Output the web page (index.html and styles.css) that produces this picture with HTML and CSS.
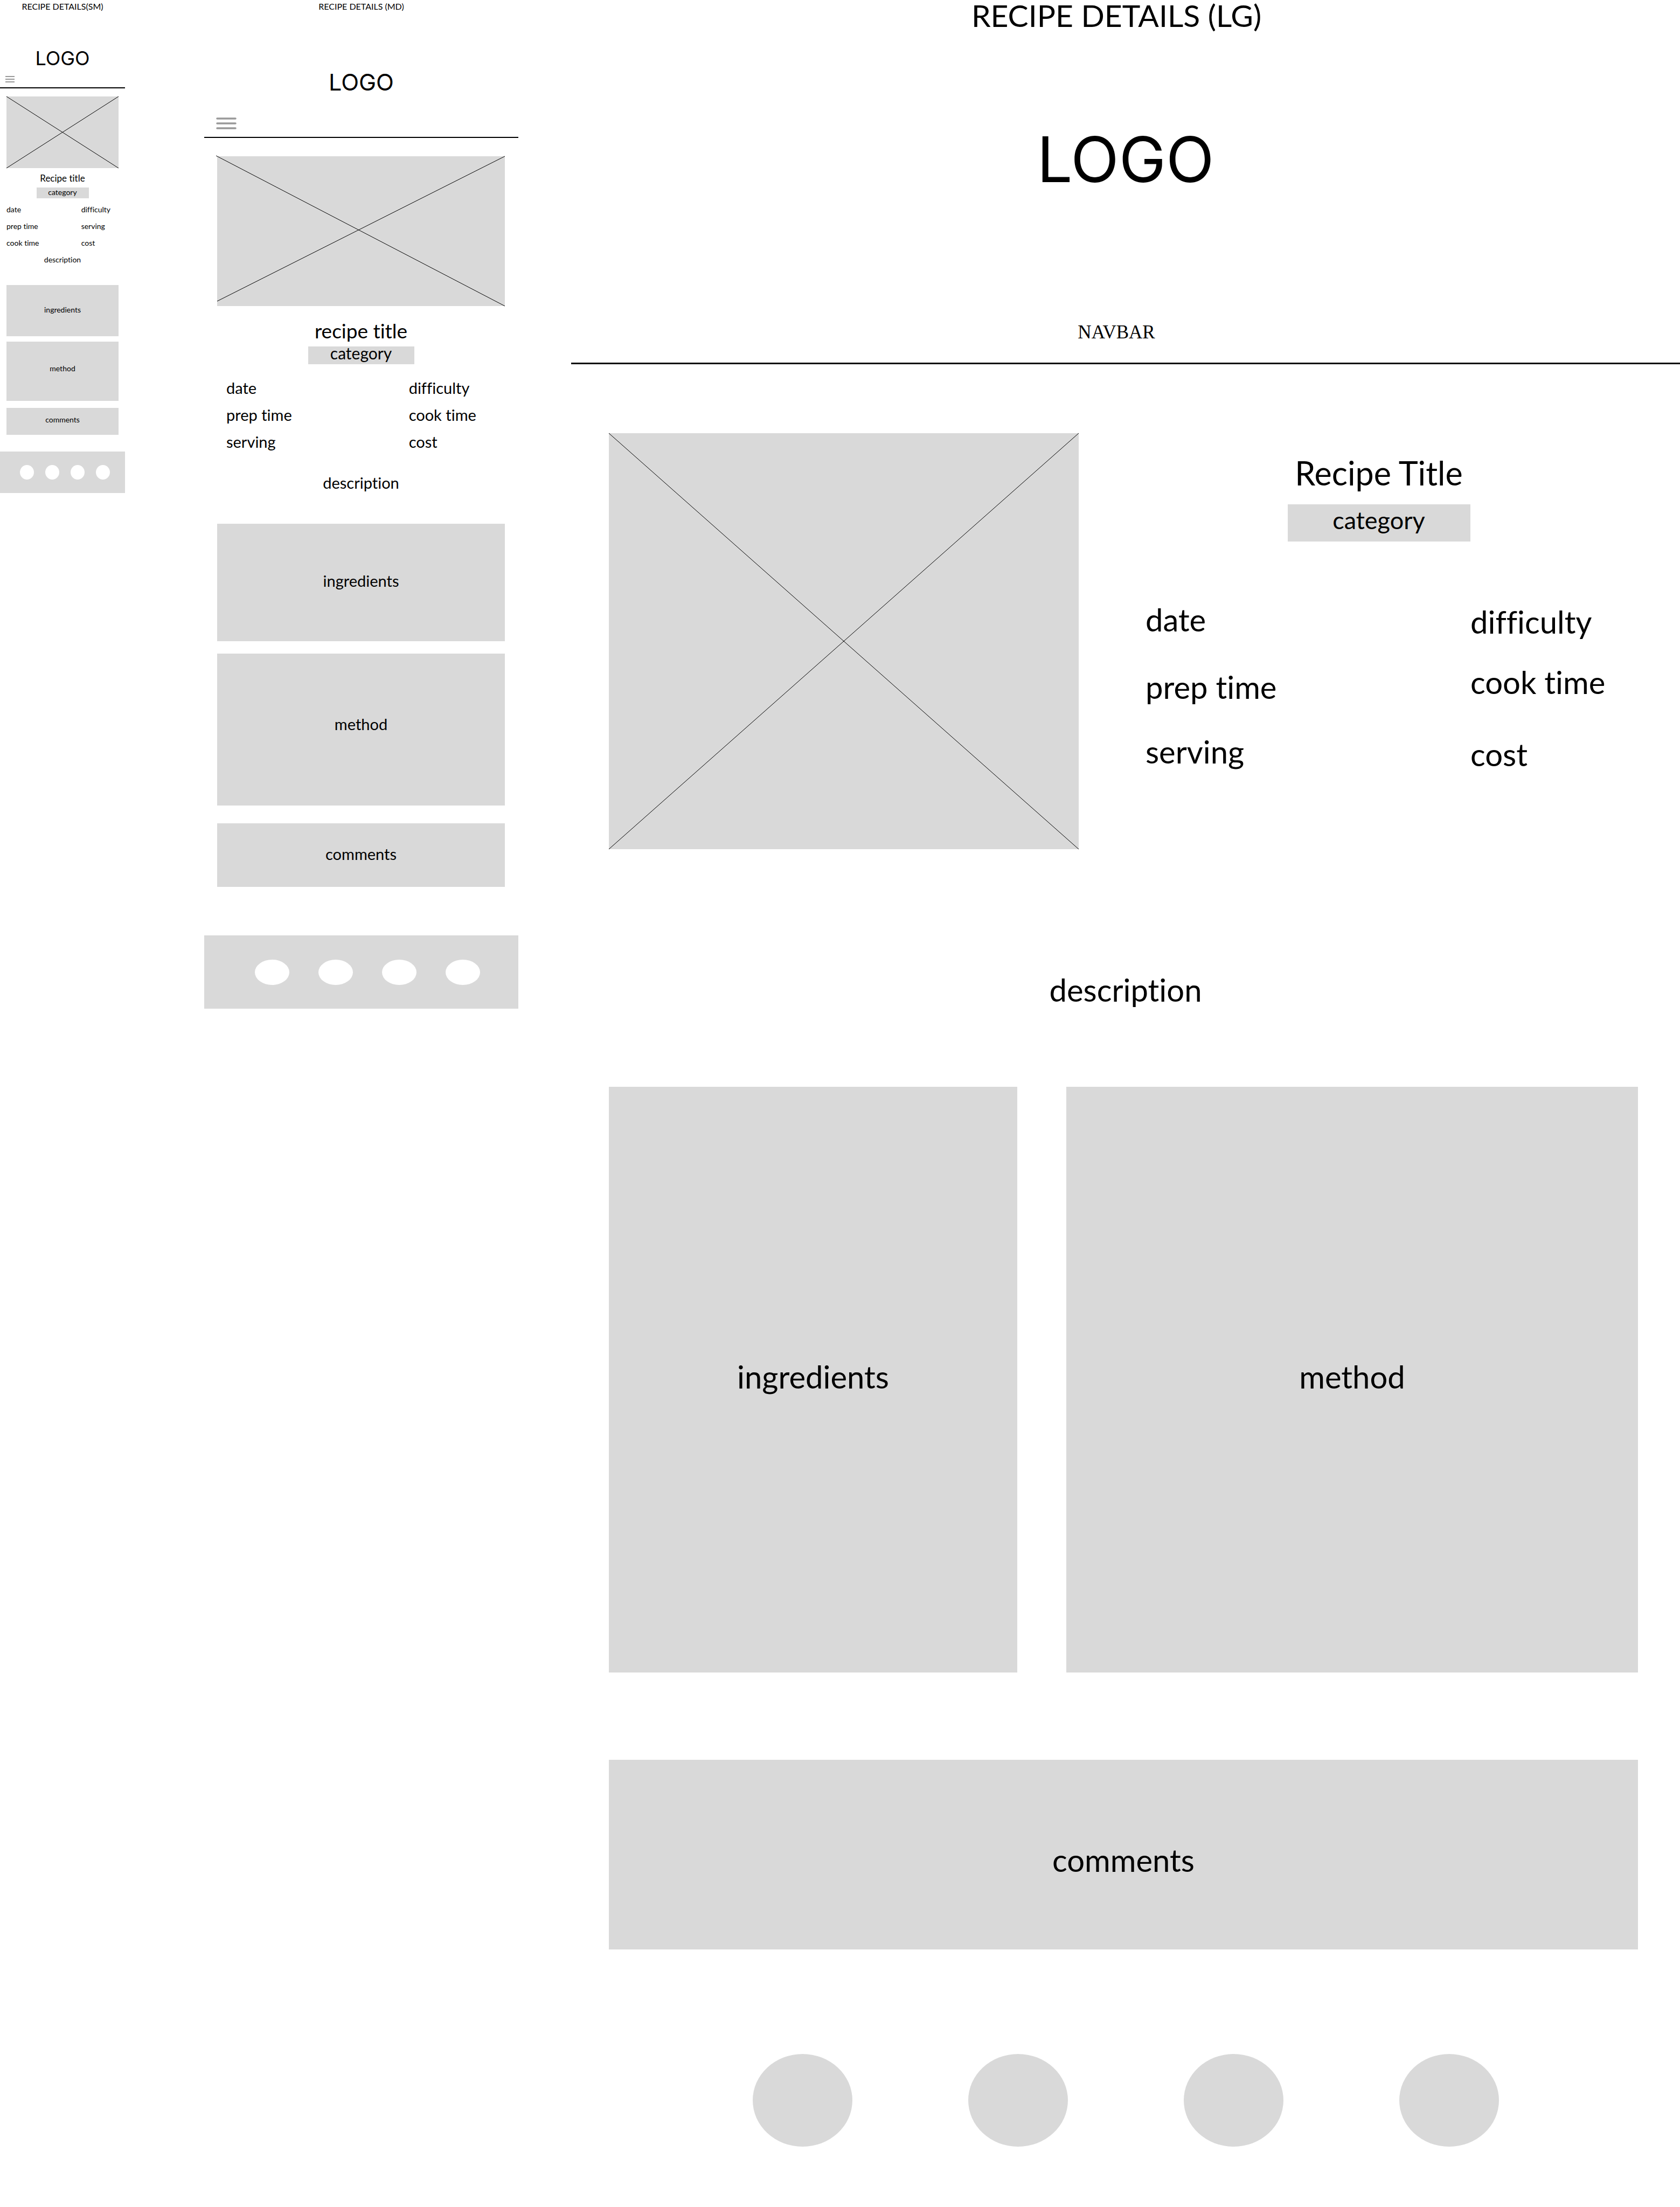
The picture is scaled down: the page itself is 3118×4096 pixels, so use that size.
FILE: index.html
```html
<!DOCTYPE html>
<html lang="en">
<head>
<meta charset="utf-8">
<meta name="viewport" content="width=device-width, initial-scale=1">
<title>Recipe details wireframes</title>
<link rel="stylesheet" href="styles.css">
</head>
<body>
<main class="boards">

  <section class="board board-sm">
    <h2 class="board-title">RECIPE DETAILS(SM)</h2>
    <header class="site-header">
      <div class="logo">LOGO</div>
      <button class="menu-button" type="button" aria-label="Menu">
        <svg class="menu-icon" viewBox="0 0 17 12" aria-hidden="true"><path d="M0 1h17M0 6h17M0 11h17" stroke-width="2"/></svg>
      </button>
    </header>
    <div class="content">
      <svg class="photo" viewBox="0 0 208 133" preserveAspectRatio="none" aria-hidden="true"><path d="M0 0L208 133M0 133L208 0"/></svg>
      <h1 class="recipe-title">Recipe title</h1>
      <p class="category">category</p>
      <div class="meta">
        <ul class="meta-column">
          <li>date</li>
          <li>prep time</li>
          <li>cook time</li>
        </ul>
        <ul class="meta-column">
          <li>difficulty</li>
          <li>serving</li>
          <li>cost</li>
        </ul>
      </div>
      <p class="description">description</p>
      <section class="panel ingredients">ingredients</section>
      <section class="panel method">method</section>
      <section class="panel comments">comments</section>
    </div>
    <footer class="site-footer">
      <a class="dot" href="#" aria-label="Social link 1"></a>
      <a class="dot" href="#" aria-label="Social link 2"></a>
      <a class="dot" href="#" aria-label="Social link 3"></a>
      <a class="dot" href="#" aria-label="Social link 4"></a>
    </footer>
  </section>

  <section class="board board-md">
    <h2 class="board-title">RECIPE DETAILS (MD)</h2>
    <header class="site-header">
      <div class="logo">LOGO</div>
      <button class="menu-button" type="button" aria-label="Menu">
        <svg class="menu-icon" viewBox="0 0 38 22" aria-hidden="true"><path d="M2 2h34M2 11h34M2 20h34" stroke-width="3.5" stroke-linecap="round"/></svg>
      </button>
    </header>
    <div class="content">
      <svg class="photo" viewBox="0 0 534 278" preserveAspectRatio="none" aria-hidden="true"><path d="M-2 -1L534 278M0 269L534 0"/></svg>
      <h1 class="recipe-title">recipe title</h1>
      <p class="category">category</p>
      <div class="meta">
        <ul class="meta-column">
          <li>date</li>
          <li>prep time</li>
          <li>serving</li>
        </ul>
        <ul class="meta-column">
          <li>difficulty</li>
          <li>cook time</li>
          <li>cost</li>
        </ul>
      </div>
      <p class="description">description</p>
      <section class="panel ingredients">ingredients</section>
      <section class="panel method">method</section>
      <section class="panel comments">comments</section>
    </div>
    <footer class="site-footer">
      <a class="dot" href="#" aria-label="Social link 1"></a>
      <a class="dot" href="#" aria-label="Social link 2"></a>
      <a class="dot" href="#" aria-label="Social link 3"></a>
      <a class="dot" href="#" aria-label="Social link 4"></a>
    </footer>
  </section>

  <section class="board board-lg">
    <h2 class="board-title">RECIPE DETAILS (LG)</h2>
    <header class="site-header">
      <div class="logo">LOGO</div>
      <nav class="navbar">NAVBAR</nav>
    </header>
    <div class="hero">
      <svg class="photo" viewBox="0 0 872 772" preserveAspectRatio="none" aria-hidden="true"><path d="M0 0L872 772M0 772L872 0"/></svg>
      <div class="info">
        <h1 class="recipe-title">Recipe Title</h1>
        <p class="category">category</p>
        <div class="meta">
          <ul class="meta-column">
            <li>date</li>
            <li>prep time</li>
            <li>serving</li>
          </ul>
          <ul class="meta-column">
            <li>difficulty</li>
            <li>cook time</li>
            <li>cost</li>
          </ul>
        </div>
      </div>
    </div>
    <p class="description">description</p>
    <div class="panels">
      <section class="panel ingredients">ingredients</section>
      <section class="panel method">method</section>
      <section class="panel comments">comments</section>
    </div>
    <footer class="site-footer">
      <a class="dot" href="#" aria-label="Social link 1"></a>
      <a class="dot" href="#" aria-label="Social link 2"></a>
      <a class="dot" href="#" aria-label="Social link 3"></a>
      <a class="dot" href="#" aria-label="Social link 4"></a>
    </footer>
  </section>

</main>
</body>
</html>
```
FILE: styles.css
```css
*, *::before, *::after { box-sizing: border-box; }

body {
  margin: 0;
  background: #fff;
  color: #000;
  font-family: Lato, "Open Sans", sans-serif;
  font-variant-ligatures: none;
}

h1, h2, p, ul {
  margin: 0;
  padding: 0;
  font-weight: 400;
  list-style: none;
}

/* Shared wireframe parts */

.boards {
  display: grid;
  grid-template-columns: minmax(0, 281fr) minmax(0, 583fr) minmax(0, 2058fr);
  column-gap: 98px;
  align-items: start;
}

.board-title,
.recipe-title,
.description { text-align: center; }

.site-header { border-bottom: 2px solid #000; }

.logo {
  font-family: Inter, sans-serif;
  text-align: center;
}

.menu-button {
  display: block;
  padding: 0;
  border: 0;
  background: none;
}

.menu-icon {
  display: block;
  width: 100%;
  fill: none;
  stroke: #999;
}

.photo {
  display: block;
  width: 100%;
  background: #d9d9d9;
  fill: none;
  stroke: #000;
  stroke-width: 1;
  overflow: visible;
}

.category {
  margin-inline: auto;
  background: #d9d9d9;
  text-align: center;
}

.meta { display: grid; }

.meta-column { display: grid; }

.panel {
  display: flex;
  align-items: center;
  justify-content: center;
  background: #d9d9d9;
}

.site-footer {
  display: flex;
  background: #d9d9d9;
}

.dot {
  border-radius: 50%;
  background: #fff;
}

/* Small */

.board-sm {
  margin-right: 49px;
  font-size: 14px;
  line-height: 18px;
}

.board-sm .board-title { font-size: 16px; line-height: 24px; }
.board-sm .logo { margin-top: 62px; font-size: 36px; line-height: 44px; }
.board-sm .site-header { padding-bottom: 9px; }
.board-sm .menu-button { width: 17px; margin: 11px 0 0 10px; }
.board-sm .content { padding: 15px 12px 0; }
.board-sm .recipe-title { margin-top: 9px; font-size: 17px; line-height: 20px; }
.board-sm .category { width: 97px; margin-top: 7px; padding-bottom: 2px; line-height: 18px; }
.board-sm .meta { grid-template-columns: 2fr 1fr; margin-top: 12px; }
.board-sm .meta-column { row-gap: 13px; }
.board-sm .description { margin: 13px 0 38px; }
.board-sm .ingredients { min-height: 95px; padding-bottom: 4px; }
.board-sm .method { min-height: 110px; margin-top: 10px; padding-bottom: 10px; }
.board-sm .comments { min-height: 50px; margin-top: 13px; padding-bottom: 6px; }
.board-sm .site-footer { gap: 21px; margin-top: 31px; padding: 25px 28px 25px 37px; }
.board-sm .dot { width: 26px; height: 27px; }

/* Medium */

.board-md {
  font-size: 29px;
  line-height: 36px;
}

.board-md .board-title { font-size: 16px; line-height: 24px; }
.board-md .logo { margin-top: 102px; font-size: 43px; line-height: 52px; }
.board-md .site-header { padding-bottom: 14px; }
.board-md .menu-button { width: 38px; margin: 40px 0 0 22px; }
.board-md .content { padding: 34px 25px 0 24px; }
.board-md .recipe-title { margin-top: 24px; font-size: 37px; line-height: 44px; }
.board-md .category { width: 197px; margin-top: 7px; padding-bottom: 8px; font-size: 30px; line-height: 25px; }
.board-md .meta { grid-template-columns: 338fr 178fr; margin-top: 26px; padding-left: 17px; }
.board-md .meta-column { row-gap: 14px; }
.board-md .description { margin: 40px 0 58px; }
.board-md .ingredients { min-height: 218px; padding-bottom: 6px; }
.board-md .method { min-height: 282px; margin-top: 23px; padding-bottom: 20px; }
.board-md .comments { min-height: 118px; margin-top: 33px; padding-bottom: 4px; }
.board-md .site-footer { gap: 54px; margin-top: 90px; padding: 45px 71px 44px 94px; }
.board-md .dot { width: 64px; height: 47px; }

/* Large */

.board-lg {
  padding-bottom: 112px;
  font-size: 58px;
  line-height: 70px;
}

.board-lg .board-title { padding-right: 34px; font-size: 57px; line-height: 56px; }
.board-lg .site-header { padding-bottom: 34px; border-bottom-width: 3px; }
.board-lg .logo { margin-top: 170px; font-size: 117px; line-height: 140px; }
.board-lg .navbar {
  margin-top: 229px;
  padding-right: 34px;
  font-family: "Liberation Serif", serif;
  font-size: 35px;
  line-height: 44px;
  text-align: center;
}
.board-lg .hero {
  display: grid;
  grid-template-columns: 872fr 914fr;
  column-gap: 124px;
  margin-top: 128px;
  padding: 0 78px 0 70px;
}
.board-lg .info { padding: 36px 48px 0 0; }
.board-lg .recipe-title { font-size: 61px; line-height: 76px; }
.board-lg .category { width: 339px; margin-top: 20px; padding-bottom: 10px; font-size: 45px; line-height: 59px; }
.board-lg .meta { grid-template-columns: 603fr 263fr; margin-top: 110px; }
.board-lg .meta-column { grid-template-rows: 125px 120px auto; }
.board-lg .meta-column + .meta-column { grid-template-rows: 112px 134px auto; padding-top: 4px; }
.board-lg .description { margin-top: 226px; }
.board-lg .panels {
  display: grid;
  grid-template-columns: 758fr 1061fr;
  gap: 162px 91px;
  margin-top: 145px;
  padding: 0 78px 0 70px;
}
.board-lg .ingredients,
.board-lg .method { min-height: 1087px; padding-bottom: 12px; }
.board-lg .comments { grid-column: 1 / -1; min-height: 352px; padding-top: 20px; }
.board-lg .site-footer { justify-content: center; gap: 215px; margin-top: 194px; background: none; }
.board-lg .dot { width: 185px; height: 172px; background: #d9d9d9; }
```
